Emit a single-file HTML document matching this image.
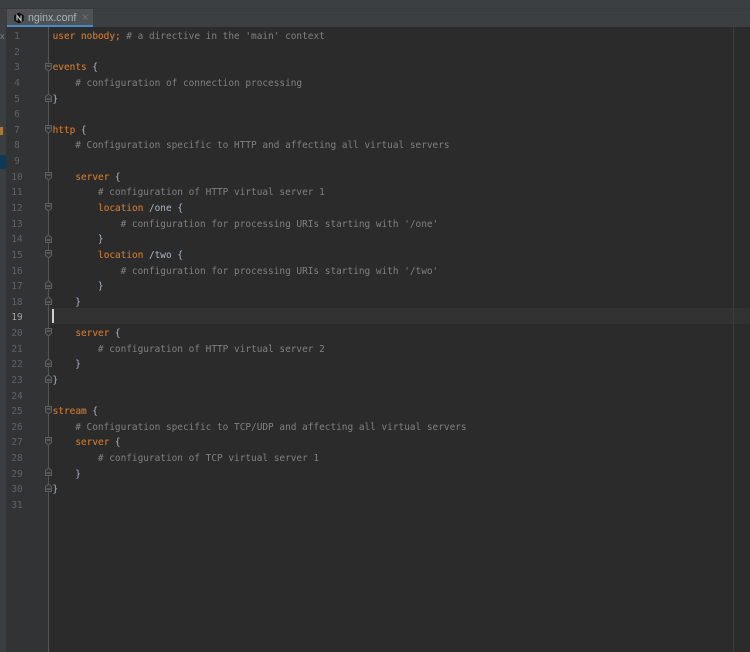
<!DOCTYPE html>
<html>
<head>
<meta charset="utf-8">
<style>
html,body{margin:0;padding:0;background:#2b2b2b}
#p{position:relative;width:750px;height:652px;overflow:hidden;background:#2b2b2b;font-family:"DejaVu Sans Mono","Liberation Mono",monospace;font-size:9.43px;filter:blur(.3px)}
.a{position:absolute}
.l{position:absolute;left:52.5px;margin-top:1px;white-space:pre;height:16px;line-height:16px;color:#a9b7c6;font-weight:400}
.n{position:absolute;left:6.5px;margin-top:1px;width:21px;text-align:center;height:16px;line-height:16px;color:#606366}
.k{color:#bd7230;font-weight:400;text-shadow:.25px 0 0 #bd7230}
.c{color:#808080}
</style>
</head>
<body>
<div id="p">
<div class="a" style="left:0;top:0;width:750px;height:27px;background:#3c3f41"></div>
<div class="a" style="left:0;top:8px;width:750px;height:1px;background:#36383a"></div>
<div class="a" style="left:0;top:27px;width:6px;height:625px;background:#3c3f41"></div>
<div class="a" style="left:6px;top:27px;width:42px;height:625px;background:#313335"></div>
<div class="a" style="left:48px;top:27px;width:1px;height:625px;background:#555555"></div>
<div class="a" style="left:733px;top:27px;width:1px;height:625px;background:#3a3a3a"></div>
<div class="a" style="left:7px;top:9px;width:86px;height:16px;background:#4e5254"></div>
<div class="a" style="left:7px;top:25px;width:86px;height:2px;background:#4a88c7"></div>
<svg class="a" style="left:13px;top:12px" width="12" height="12" viewBox="0 0 12 12"><path d="M6 0.5L10.8 3.2V8.8L6 11.5L1.2 8.8V3.2Z" fill="#111"/><path d="M4 8.5V3.5L8 8.5V3.5" fill="none" stroke="#ccc" stroke-width="1.1"/></svg>
<div class="a" style="left:28px;top:10px;font:10.6px/16px 'Liberation Sans',sans-serif;color:#a9b2ba">nginx.conf</div>
<div class="a" style="left:82px;top:10px;font:11px/16px 'Liberation Sans',sans-serif;color:#6f7375">×</div>
<div class="a" style="left:0;top:30px;font:9px/12px 'Liberation Sans',sans-serif;color:#7d8082">x</div>
<div class="a" style="left:0;top:127px;width:3px;height:8px;background:#a87a3a"></div>
<div class="a" style="left:0;top:155px;width:6px;height:14px;background:#0f3a57"></div>
<div class="a" style="left:49px;top:308px;width:684px;height:16px;background:#323232"></div>
<div class="a" style="left:734px;top:308px;width:16px;height:16px;background:#323232"></div>
<div class="a" style="left:52px;top:309px;width:2px;height:14px;background:#d0d0d0"></div>

<div class="n" style="top:28px">1</div><div class="n" style="top:43.6px">2</div><div class="n" style="top:59.3px">3</div><div class="n" style="top:74.9px">4</div><div class="n" style="top:90.5px">5</div><div class="n" style="top:106.2px">6</div><div class="n" style="top:121.8px">7</div><div class="n" style="top:137.4px">8</div><div class="n" style="top:153px">9</div><div class="n" style="top:168.7px">10</div><div class="n" style="top:184.3px">11</div><div class="n" style="top:199.9px">12</div><div class="n" style="top:215.6px">13</div><div class="n" style="top:231.2px">14</div><div class="n" style="top:246.8px">15</div><div class="n" style="top:262.5px">16</div><div class="n" style="top:278.1px">17</div><div class="n" style="top:293.7px">18</div><div class="n" style="top:309.4px;color:#a4a3a3">19</div><div class="n" style="top:325px">20</div><div class="n" style="top:340.6px">21</div><div class="n" style="top:356.2px">22</div><div class="n" style="top:371.9px">23</div><div class="n" style="top:387.5px">24</div><div class="n" style="top:403.1px">25</div><div class="n" style="top:418.8px">26</div><div class="n" style="top:434.4px">27</div><div class="n" style="top:450px">28</div><div class="n" style="top:465.7px">29</div><div class="n" style="top:481.3px">30</div><div class="n" style="top:496.9px">31</div>

<svg class="a" style="left:0;top:0" width="60" height="652" viewBox="0 0 60 652">
<defs>
<g id="o"><path d="M45.5 -3.5H51.5V1.5L48.5 4L45.5 1.5Z" fill="#313335" stroke="#5d6062"/><path d="M46.5 -1H50.5" stroke="#7a7c7e"/></g>
<g id="e"><path d="M45.5 3.5H51.5V-1.5L48.5 -4L45.5 -1.5Z" fill="#313335" stroke="#5d6062"/><path d="M46.5 1H50.5" stroke="#7a7c7e"/></g>
</defs>
<use href="#o" x="0" y="67"/><use href="#o" x="0" y="129"/><use href="#o" x="0" y="176"/><use href="#o" x="0" y="207"/><use href="#o" x="0" y="254"/><use href="#o" x="0" y="332"/><use href="#o" x="0" y="410"/><use href="#o" x="0" y="441"/>
<use href="#e" x="0" y="98"/><use href="#e" x="0" y="239"/><use href="#e" x="0" y="285"/><use href="#e" x="0" y="301"/><use href="#e" x="0" y="363"/><use href="#e" x="0" y="379"/><use href="#e" x="0" y="472"/><use href="#e" x="0" y="488"/>
</svg>

<div class="l" style="top:28px"><span class="k">user nobody;</span><span class="c"> # a directive in the 'main' context</span></div>
<div class="l" style="top:59.3px"><span class="k">events</span> {</div>
<div class="l c" style="top:74.9px;color:#808080">    # configuration of connection processing</div>
<div class="l" style="top:90.5px">}</div>
<div class="l" style="top:121.8px"><span class="k">http</span> {</div>
<div class="l" style="top:137.4px;color:#808080">    # Configuration specific to HTTP and affecting all virtual servers</div>
<div class="l" style="top:168.7px">    <span class="k">server</span> {</div>
<div class="l" style="top:184.3px;color:#808080">        # configuration of HTTP virtual server 1</div>
<div class="l" style="top:199.9px">        <span class="k">location</span> /one {</div>
<div class="l" style="top:215.6px;color:#808080">            # configuration for processing URIs starting with '/one'</div>
<div class="l" style="top:231.2px">        }</div>
<div class="l" style="top:246.8px">        <span class="k">location</span> /two {</div>
<div class="l" style="top:262.5px;color:#808080">            # configuration for processing URIs starting with '/two'</div>
<div class="l" style="top:278.1px">        }</div>
<div class="l" style="top:293.7px">    }</div>
<div class="l" style="top:325px">    <span class="k">server</span> {</div>
<div class="l" style="top:340.6px;color:#808080">        # configuration of HTTP virtual server 2</div>
<div class="l" style="top:356.2px">    }</div>
<div class="l" style="top:371.9px">}</div>
<div class="l" style="top:403.1px"><span class="k">stream</span> {</div>
<div class="l" style="top:418.8px;color:#808080">    # Configuration specific to TCP/UDP and affecting all virtual servers</div>
<div class="l" style="top:434.4px">    <span class="k">server</span> {</div>
<div class="l" style="top:450px;color:#808080">        # configuration of TCP virtual server 1</div>
<div class="l" style="top:465.7px">    }</div>
<div class="l" style="top:481.3px">}</div>
</div>
</body>
</html>
